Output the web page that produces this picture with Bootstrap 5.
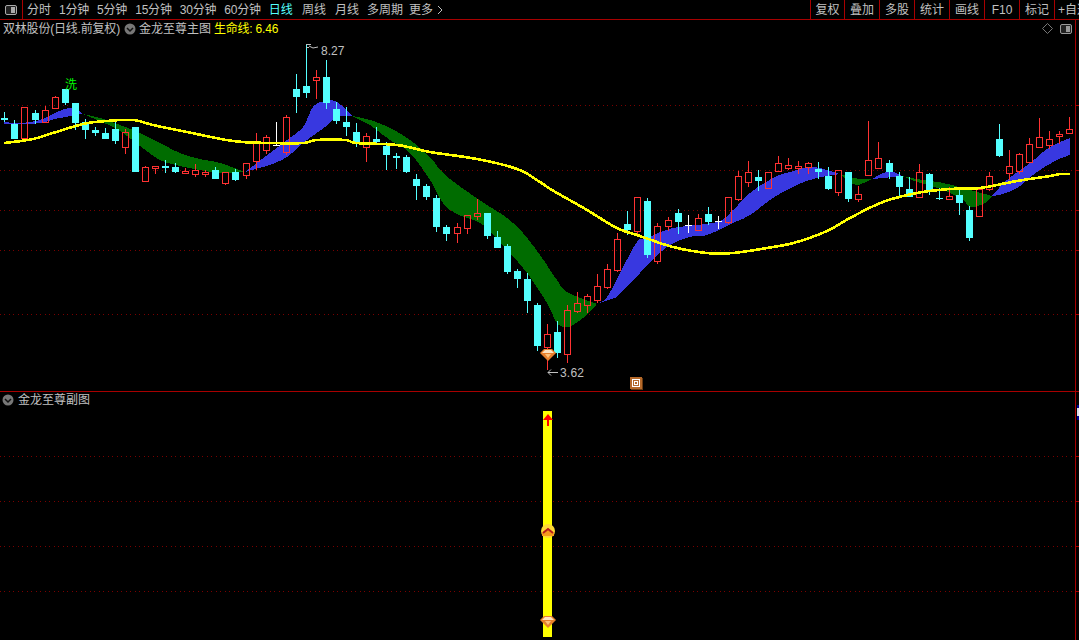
<!DOCTYPE html>
<html lang="zh-CN">

<head>
    <meta charset="UTF-8">
    <meta name="viewport" content="width=device-width, initial-scale=1.0">
    <title>双林股份 - 日线</title>
    <link href="https://cdn.jsdelivr.net/npm/bootstrap@5.3.1/dist/css/bootstrap.min.css" rel="stylesheet">
    <style>
        html, body { height: 100%; margin: 0; background: #000; overflow: hidden; }
        body { font-family: "Liberation Sans", "Noto Sans CJK SC", sans-serif; font-size: 12px; line-height: 14px; color: #c0c0c0; }
        .top-bar { height: 20px; border-bottom: 1px solid #a80000; white-space: nowrap; }
        .layout-btn { width: 23px; height: 19px; border-right: 1px solid #a80000; }
        .period-list { gap: 8px; padding-left: 4px; }
        .period-list a, .tool-list a { color: #c0c0c0; text-decoration: none; }
        .period-list a.current { color: #54ffff; }
        .period-list a.num-label { letter-spacing: -.2px; }
        .period-list a.gap-wide { margin-left: 1px; }
        .period-list a.gap-tight { margin-left: -2px; }
        .tool-list { margin-left: auto; }
        .tool-list a { width: 35px; height: 19px; border-left: 1px solid #a80000; }
        .tool-list a:first-child { width: 34px; }
        .tool-list a:last-child { width: 25px; justify-content: flex-start !important; padding-left: 3px; overflow: hidden; }
        .chart-pane { height: 371px; }
        .sub-pane { height: 249px; border-top: 1px solid #a80000; }
        .chart-pane svg, .sub-pane svg { display: block; }
        .chart-title { top: 2px; left: 3px; }
        .chart-title .stock-name { letter-spacing: -.2px; }
        .chart-title .fold-icon { margin: 0 3px 0 4px; }
        .chart-title .life-value { color: #ffff00; margin-left: 3px; letter-spacing: -.2px; }
        .sub-pane .chart-title { top: 1px; left: 2px; }
        .sub-pane .chart-title .fold-icon { margin: 0 4px 0 0; }
        .pane-tools { top: 3px; right: 7px; gap: 7px; }
        svg text { font-family: "Liberation Sans", "Noto Sans CJK SC", sans-serif; font-size: 12px; }
    </style>
</head>

<body>
    <div class="top-bar d-flex align-items-center overflow-hidden">
        <div class="layout-btn d-flex align-items-center justify-content-center flex-shrink-0">
            <svg width="12" height="10" viewBox="0 0 12 10"><rect x=".5" y=".5" width="11" height="9" rx="1.5" fill="#222" stroke="#aaa"/><rect x="6" y="2" width="4" height="6" fill="#aaa"/></svg>
        </div>
        <div class="period-list d-flex">
            <a href="#">分时</a>
            <a href="#" class="num-label">1分钟</a>
            <a href="#" class="num-label">5分钟</a>
            <a href="#" class="num-label">15分钟</a>
            <a href="#" class="num-label">30分钟</a>
            <a href="#" class="num-label">60分钟</a>
            <a href="#" class="current">日线</a>
            <a href="#" class="gap-wide">周线</a>
            <a href="#" class="gap-wide">月线</a>
            <a href="#">多周期</a>
            <a href="#" class="gap-tight d-flex align-items-center gap-1">更多
                <svg width="6" height="10" viewBox="0 0 6 10"><path d="M1 1l4 4-4 4" fill="none" stroke="#c0c0c0"/></svg>
            </a>
        </div>
        <div class="tool-list d-flex">
            <a href="#" class="d-flex align-items-center justify-content-center">复权</a>
            <a href="#" class="d-flex align-items-center justify-content-center">叠加</a>
            <a href="#" class="d-flex align-items-center justify-content-center">多股</a>
            <a href="#" class="d-flex align-items-center justify-content-center">统计</a>
            <a href="#" class="d-flex align-items-center justify-content-center">画线</a>
            <a href="#" class="d-flex align-items-center justify-content-center">F10</a>
            <a href="#" class="d-flex align-items-center justify-content-center">标记</a>
            <a href="#" class="d-flex align-items-center justify-content-center">+自选</a>
        </div>
    </div>

    <div class="chart-pane position-relative">
        <svg id="main-chart" width="1079" height="371" viewBox="0 20 1079 371"></svg>
        <div class="chart-title position-absolute d-flex align-items-center">
            <span class="stock-name">双林股份(日线.前复权)</span>
            <svg class="fold-icon" width="12" height="12" viewBox="0 0 12 12"><circle cx="6" cy="6" r="5.5" fill="#777"/><path d="M3 5l3 3 3-3" fill="none" stroke="#111" stroke-width="1.5"/></svg>
            <span>金龙至尊主图</span>
            <span class="life-value">生命线: 6.46</span>
        </div>
        <div class="pane-tools position-absolute d-flex align-items-center">
            <svg width="11" height="11" viewBox="0 0 11 11"><path d="M5.5 .5l5 5-5 5-5-5z" fill="none" stroke="#777"/></svg>
            <svg width="12" height="10" viewBox="0 0 12 10"><rect x=".5" y=".5" width="11" height="9" rx="1.5" fill="#222" stroke="#999"/><rect x="6" y="2" width="4" height="6" fill="#999"/></svg>
        </div>
    </div>

    <div class="sub-pane position-relative">
        <svg id="sub-chart" width="1079" height="248" viewBox="0 392 1079 248"></svg>
        <div class="chart-title position-absolute d-flex align-items-center">
            <svg class="fold-icon" width="12" height="12" viewBox="0 0 12 12"><circle cx="6" cy="6" r="5.5" fill="#777"/><path d="M3 5l3 3 3-3" fill="none" stroke="#111" stroke-width="1.5"/></svg>
            <span>金龙至尊副图</span>
        </div>
    </div>

    <script src="https://cdn.jsdelivr.net/npm/bootstrap@5.3.1/dist/js/bootstrap.bundle.min.js"></script>
    <script>
        const RED = '#ff3232', CYAN = '#54ffff', LINE = '#a80000';

        // type, high, body top, body bottom, low (screen px read off the chart)
        const candles = [
            ['c',112,118,120,122],['c',120,124,139,139],['r',107,107,138,138],['c',110,113,120,124],['r',106,110,122,122],
            ['r',96,97,108,109],['c',89,89,103,105],['c',103,103,123,130],['c',119,122,130,139],['c',127,130,133,136],
            ['c',128,133,139,139],['c',122,129,141,144],['r',129,132,147,154],['c',127,127,172,172],['r',166,167,181,181],
            ['r',166,166,168,174],['c',160,166,168,173],['c',163,167,172,173],['r',168,171,173,173],['r',164,170,174,177],
            ['r',170,172,174,177],['c',167,170,179,179],['r',172,172,183,185],['c',169,172,180,181],['r',163,163,175,179],
            ['r',133,141,161,170],['r',135,137,150,154],['w',122,145,146,146],['r',115,117,152,155],['c',74,89,97,113],
            ['c',44,86,93,98],['r',70,77,80,99],['c',60,77,103,109],['c',102,109,121,124],['c',107,122,127,136],
            ['c',123,132,142,147],['r',133,136,147,162],['c',127,139,142,143],['c',142,146,155,170],['c',153,156,158,169],
            ['c',155,157,172,173],['c',174,179,186,200],['c',184,186,197,200],['c',195,198,227,232],['c',225,227,234,241],
            ['r',223,227,233,243],['r',215,215,228,234],['r',199,213,216,220],['c',213,213,236,239],['c',231,237,248,248],
            ['c',244,246,272,274],['c',269,271,279,288],['c',273,279,301,313],['c',303,305,346,351],['r',324,334,347,370],
            ['c',321,332,353,358],['r',305,310,354,363],['r',292,303,311,313],['r',294,296,305,313],['r',274,286,300,303],
            ['r',264,269,287,289],['r',233,239,270,272],['c',211,224,230,235],['r',197,197,231,235],['c',198,201,255,258],
            ['r',223,226,261,264],['r',217,220,226,231],['c',209,213,222,234],['w',215,225,226,233],['r',214,218,230,230],
            ['c',207,214,222,225],['w',216,221,222,229],['r',197,197,222,224],['r',171,176,199,201],['r',161,172,182,187],
            ['c',170,177,181,191],['r',172,172,188,188],['r',156,163,171,172],['r',158,165,168,170],['r',161,166,168,174],
            ['r',162,163,167,174],['c',162,169,172,179],['c',167,176,189,190],['r',170,170,192,196],['c',172,172,199,202],
            ['r',186,194,199,202],['r',121,160,175,175],['r',142,158,168,169],['c',160,163,172,179],['c',172,176,187,197],
            ['c',177,189,197,197],['r',164,172,197,198],['c',173,174,192,195],['c',188,198,199,200],['r',187,196,199,199],
            ['c',187,195,203,215],['c',206,210,238,241],['r',189,189,216,216],['r',172,176,189,191],['c',124,139,156,157],
            ['r',150,166,173,180],['r',153,154,171,174],['r',138,144,162,162],['r',118,137,147,147],['r',131,139,145,149],
            ['r',131,134,136,144],['r',117,129,133,133]
        ];

        // ribbon parts: colour, upper edge, lower edge
        const ribbons = [
            ['#3838e0', [[4,122],[20,123],[40,120],[55,113],[65,109],[75,108],[83,114]], [[83,114],[75,115],[65,117],[55,119],[40,123],[20,124],[4,124]]],
            ['#006c00', [[83,114],[100,118],[120,125],[140,133],[160,143],[180,153],[200,159],[220,163],[245,172]], [[245,172],[220,173],[200,170],[180,166],[160,160],[140,146],[120,131],[100,121]]],
            ['#3838e0', [[245,172],[270,153],[287,140],[303,127],[313,107],[325,101],[337,102],[352,116]], [[352,116],[337,117],[325,127],[303,143],[287,157],[270,165]]],
            ['#006c00', [[352,116],[370,120],[390,128],[410,140],[430,157],[443,173],[465,190],[487,205],[507,218],[523,233],[540,255],[557,280],[567,292],[597,304]], [[597,304],[583,318],[568,327],[557,323],[547,303],[527,273],[507,250],[483,225],[457,214],[443,203],[430,180],[410,153],[390,140],[370,125]]],
            ['#3838e0', [[597,304],[607,297],[620,273],[637,242],[647,238],[673,228],[717,222],[733,210],[750,193],[773,178],[790,172],[813,167],[840,174]], [[840,174],[817,178],[797,185],[773,198],[750,215],[733,223],[707,235],[690,237],[667,247],[640,273],[617,297]]],
            ['#006c00', [[840,174],[850,177],[860,179],[872,179]], [[872,179],[858,185],[850,182]]],
            ['#3838e0', [[872,179],[883,173],[893,172],[902,176]], [[902,176],[883,178]]],
            ['#006c00', [[902,176],[917,179],[943,183],[963,188],[992,196]], [[992,197],[983,204],[970,207],[963,200],[943,190],[917,182]]],
            ['#3838e0', [[992,196],[1007,180],[1030,163],[1050,147],[1070,138]], [[1070,155],[1057,160],[1037,172],[1017,188],[1000,195]]]
        ];

        const lifeLine = [[4,143],[13,142],[33,139],[53,133],[83,124],[107,121],[133,120],[153,125],[187,132],[233,141],[270,143],[303,143],[317,140],[345,140],[357,143],[397,145],[430,152],[477,159],[517,169],[540,182],[552,190],[587,210],[617,228],[640,236],[673,247],[707,253],[733,253],[773,247],[797,242],[827,231],[850,218],[883,202],[917,193],[950,189],[980,188],[1017,181],[1050,176],[1060,174],[1070,174]];

        // catmull-rom through the points read off the picture
        function smooth(pts) {
            const out = [];
            for (let i = 0; i < pts.length - 1; i++) {
                const a = pts[Math.max(i - 1, 0)], b = pts[i], c = pts[i + 1], d = pts[Math.min(i + 2, pts.length - 1)];
                for (let s = 0; s < 8; s++) {
                    const t = s / 8, t2 = t * t, t3 = t2 * t;
                    const calc = k => .5 * (2 * b[k] + (c[k] - a[k]) * t + (2 * a[k] - 5 * b[k] + 4 * c[k] - d[k]) * t2 + (3 * b[k] - a[k] - 3 * c[k] + d[k]) * t3);
                    out.push([calc(0).toFixed(1), calc(1).toFixed(1)]);
                }
            }
            out.push(pts[pts.length - 1]);
            return out;
        }

        const gem = (x, y) => `<g transform="translate(${x} ${y})">
            <path d="M-4-5h8l4 4-8 8-8-8z" fill="#e8802c"/>
            <path d="M-3-4h6l3 3h-12z" fill="#fde3c0"/>
            <path d="M-3 0h6l-3 4z" fill="#ffc27a"/>
        </g>`;

        const gridLine = y => `<line x1="0" x2="1075" y1="${y + .5}" y2="${y + .5}" stroke="#7a0000" stroke-dasharray="1 3 1 4"/><rect x="1076" y="${y}" width="3" height="1" fill="${LINE}"/>`;

        function candleSvg(d, i) {
            const x = Math.round(4.4 + i * 10.047);
            const [type, high, top, bottom, low] = d;
            if (type === 'r') {
                return `<rect x="${x}" y="${high}" width="1" height="${top - high}" fill="${RED}"/>` +
                    `<rect x="${x}" y="${bottom}" width="1" height="${low - bottom}" fill="${RED}"/>` +
                    `<rect x="${x - 2.5}" y="${top + .5}" width="6" height="${bottom - top}" fill="none" stroke="${RED}"/>`;
            }
            const color = type === 'w' ? '#fff' : CYAN;
            return `<rect x="${x}" y="${high}" width="1" height="${low - high}" fill="${color}"/>` +
                `<rect x="${x - 3}" y="${top}" width="7" height="${bottom - top}" fill="${color}"/>`;
        }

        let main = [105, 170, 210, 250, 314].map(gridLine).join('');
        main += ribbons.map(r => `<polygon shape-rendering="crispEdges" points="${smooth(r[1]).concat(smooth(r[2])).join(' ')}" fill="${r[0]}"/>`).join('');
        main += candles.map(candleSvg).join('');
        main += `<polyline shape-rendering="crispEdges" points="${smooth(lifeLine).join(' ')}" fill="none" stroke="#ffff00" stroke-width="2.6"/>`;
        main += `<text x="65" y="89" fill="#00ff00">洗</text>`;
        main += `<path d="M306 44.5h5M306 47.5h3M309 46l4 2 5-1" fill="none" stroke="#c0c0c0"/><text x="321" y="55" fill="#c0c0c0">8.27</text>`;
        main += `<path d="M558 372.5h-10M551 369.5l-3 3 3 3" fill="none" stroke="#c0c0c0"/><text x="560" y="377" fill="#c0c0c0" letter-spacing=".2">3.62</text>`;
        main += gem(548, 354);
        main += `<rect x="631" y="378" width="12" height="12" fill="#6b3a10"/><rect x="630" y="377" width="12" height="12" fill="#b5692a"/><rect x="632.5" y="379.5" width="7" height="7" fill="none" stroke="#fff"/><rect x="634.5" y="381.5" width="3" height="3" fill="none" stroke="#fff"/>`;
        main += `<rect x="1075" y="20" width="1" height="371" fill="${LINE}"/>`;
        document.getElementById('main-chart').innerHTML = main;

        let sub = [456, 501, 546, 591].map(gridLine).join('');
        sub += `<rect x="543" y="411" width="9" height="226" fill="#ffff00"/>`;
        sub += `<path d="M548 414l5 6h-4v6h-2v-6h-4z" fill="#ff0000"/>`;
        sub += `<circle cx="548" cy="531" r="7" fill="#fdd835"/><path d="M542 533l6-5 6 5v3h-12z" fill="#f59a1c"/><path d="M543 533l5-4 5 4" fill="none" stroke="#b71c1c" stroke-width="2"/>`;
        sub += gem(548, 621);
        sub += `<rect x="1075" y="392" width="1" height="248" fill="${LINE}"/>`;
        sub += `<rect x="1077" y="405" width="2" height="15" fill="#000090"/><rect x="1077" y="408" width="2" height="8" fill="#dde"/>`;
        document.getElementById('sub-chart').innerHTML = sub;
    </script>
</body>
</html>
